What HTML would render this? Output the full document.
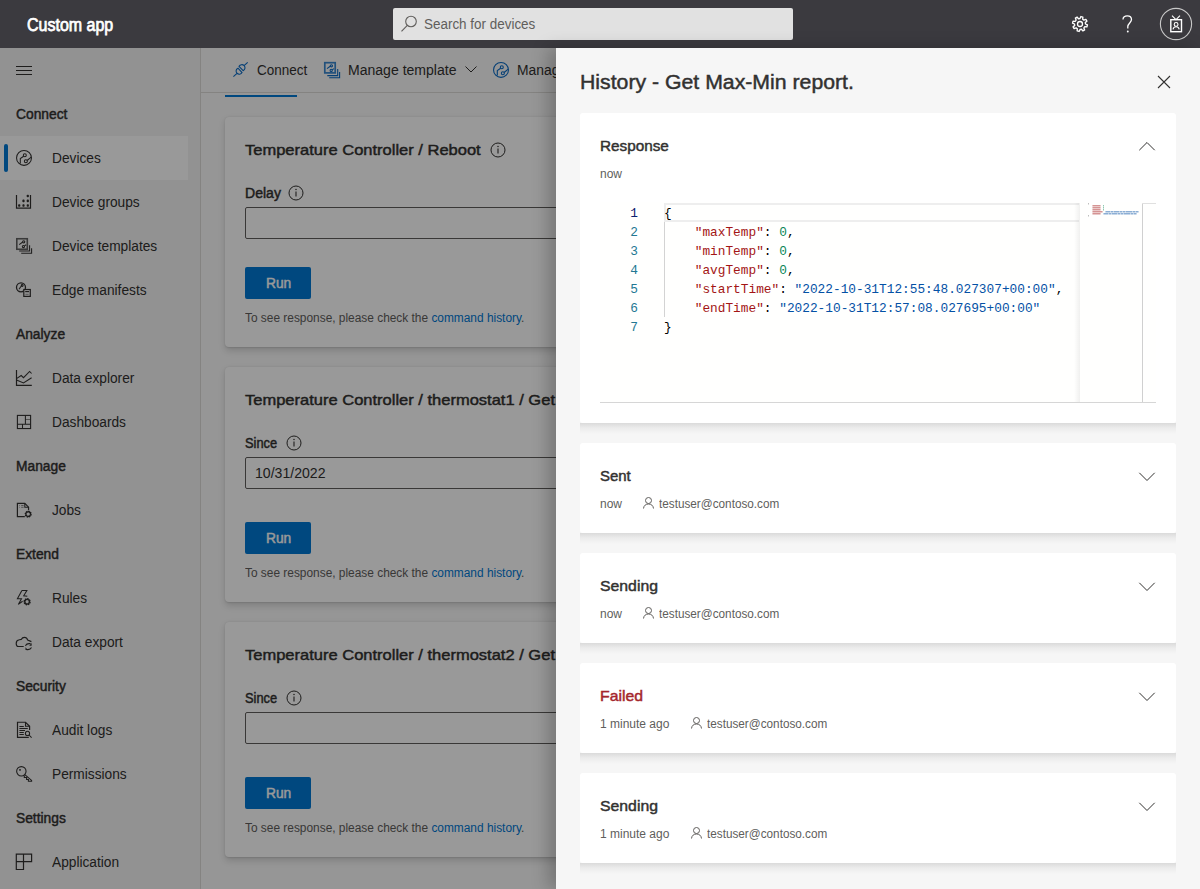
<!DOCTYPE html><html><head><meta charset="utf-8"><style>
*{box-sizing:border-box;margin:0;padding:0}
html,body{width:1200px;height:889px;overflow:hidden;position:relative;font-family:"Liberation Sans",sans-serif;color:#323130;background:#fafafa}
.t{position:absolute;white-space:nowrap}
.a{position:absolute}
svg{position:absolute;overflow:visible}
</style></head><body><div class="a" style="left:0;top:0;width:1200px;height:48px;background:#3b3a3f"></div>
<div class="t" style="left:27.3px;top:13px;font-size:18px;line-height:25px;-webkit-text-stroke:0.45px #fff;color:#fff;transform:scaleX(0.8883);transform-origin:0 0;-webkit-text-stroke:0.75px #fff;">Custom app</div>
<div class="a" style="left:393px;top:8px;width:400px;height:32px;background:#e1e1e1;border-radius:2px"></div>
<svg style="left:400px;top:15px" width="18" height="18" viewBox="0 0 18 18"><circle cx="11" cy="6.5" r="5.3" fill="none" stroke="#605e5c" stroke-width="1.1"/><line x1="7.3" y1="10.3" x2="1.5" y2="16.3" stroke="#605e5c" stroke-width="1.1"/></svg>
<div class="t" style="left:424px;top:14px;font-size:14px;line-height:20px;font-weight:normal;color:#605e5c;transform:scaleX(0.9599);transform-origin:0 0;">Search for devices</div>
<svg style="left:1070px;top:14px" width="20" height="20" viewBox="0 0 20 20"><path d="M15.50,10.00 L17.45,10.88 L16.93,12.87 L14.80,12.69 L13.89,13.89 L14.64,15.89 L12.87,16.93 L11.49,15.29 L10.00,15.50 L9.12,17.45 L7.13,16.93 L7.31,14.80 L6.11,13.89 L4.11,14.64 L3.07,12.87 L4.71,11.49 L4.50,10.00 L2.55,9.12 L3.07,7.13 L5.20,7.31 L6.11,6.11 L5.36,4.11 L7.13,3.07 L8.51,4.71 L10.00,4.50 L10.88,2.55 L12.87,3.07 L12.69,5.20 L13.89,6.11 L15.89,5.36 L16.93,7.13 L15.29,8.51Z" fill="none" stroke="#fff" stroke-width="1.35" stroke-linejoin="round"/><circle cx="10" cy="10" r="2.5" fill="none" stroke="#fff" stroke-width="1.3"/></svg>
<svg style="left:1118px;top:14px" width="20" height="20" viewBox="0 0 20 20"><path d="M5,5.4 C5,3.2 6.8,1.9 9.2,1.9 C11.6,1.9 13.5,3.4 13.5,5.6 C13.5,8.6 9.8,9.4 9.8,12.6 L9.8,14.6" fill="none" stroke="#fff" stroke-width="1.3"/><circle cx="9.8" cy="17.5" r="0.95" fill="#fff"/></svg>
<svg style="left:1158px;top:6px" width="36" height="36" viewBox="0 0 36 36"><circle cx="18" cy="18" r="15.6" fill="none" stroke="#c8c8c8" stroke-width="1.1"/><rect x="12.8" y="13.7" width="10.7" height="12" fill="none" stroke="#fff" stroke-width="1.4"/><path d="M14,9.6 L18,13.6 L22,9.6" fill="none" stroke="#fff" stroke-width="1.1"/><circle cx="18.1" cy="18.4" r="1.9" fill="none" stroke="#fff" stroke-width="1.1"/><path d="M15,23.4 C15.3,21.6 16.5,20.8 18.1,20.8 C19.7,20.8 20.9,21.6 21.2,23.4" fill="none" stroke="#fff" stroke-width="1.1"/></svg>
<div class="a" style="left:0;top:48px;width:200px;height:841px;background:#f4f4f4"></div>
<div class="a" style="left:200px;top:48px;width:1px;height:841px;background:#dcdad8"></div>
<div class="a" style="left:0;top:136px;width:188px;height:44px;background:#ffffff"></div>
<div class="a" style="left:4px;top:144px;width:4px;height:28px;background:#0078d4;border-radius:2px"></div>
<div class="a" style="left:16px;top:65.5px;width:16px;height:1px;background:#323130"></div>
<div class="a" style="left:16px;top:69.5px;width:16px;height:1px;background:#323130"></div>
<div class="a" style="left:16px;top:74px;width:16px;height:1px;background:#323130"></div>
<div class="t" style="left:15.5px;top:104px;font-size:14px;line-height:20px;-webkit-text-stroke:0.45px #323130;color:#323130;transform:scaleX(0.9850);transform-origin:0 0;">Connect</div>
<div class="t" style="left:51.5px;top:148px;font-size:14px;line-height:20px;font-weight:normal;color:#323130;transform:scaleX(0.9800);transform-origin:0 0;">Devices</div>
<div class="t" style="left:51.5px;top:192px;font-size:14px;line-height:20px;font-weight:normal;color:#323130;transform:scaleX(0.9800);transform-origin:0 0;">Device groups</div>
<div class="t" style="left:51.5px;top:236px;font-size:14px;line-height:20px;font-weight:normal;color:#323130;transform:scaleX(0.9800);transform-origin:0 0;">Device templates</div>
<div class="t" style="left:51.5px;top:280px;font-size:14px;line-height:20px;font-weight:normal;color:#323130;transform:scaleX(0.9800);transform-origin:0 0;">Edge manifests</div>
<div class="t" style="left:15.5px;top:324px;font-size:14px;line-height:20px;-webkit-text-stroke:0.45px #323130;color:#323130;transform:scaleX(0.9850);transform-origin:0 0;">Analyze</div>
<div class="t" style="left:51.5px;top:368px;font-size:14px;line-height:20px;font-weight:normal;color:#323130;transform:scaleX(0.9800);transform-origin:0 0;">Data explorer</div>
<div class="t" style="left:51.5px;top:412px;font-size:14px;line-height:20px;font-weight:normal;color:#323130;transform:scaleX(0.9800);transform-origin:0 0;">Dashboards</div>
<div class="t" style="left:15.5px;top:456px;font-size:14px;line-height:20px;-webkit-text-stroke:0.45px #323130;color:#323130;transform:scaleX(0.9850);transform-origin:0 0;">Manage</div>
<div class="t" style="left:51.5px;top:500px;font-size:14px;line-height:20px;font-weight:normal;color:#323130;transform:scaleX(0.9800);transform-origin:0 0;">Jobs</div>
<div class="t" style="left:15.5px;top:544px;font-size:14px;line-height:20px;-webkit-text-stroke:0.45px #323130;color:#323130;transform:scaleX(0.9850);transform-origin:0 0;">Extend</div>
<div class="t" style="left:51.5px;top:588px;font-size:14px;line-height:20px;font-weight:normal;color:#323130;transform:scaleX(0.9800);transform-origin:0 0;">Rules</div>
<div class="t" style="left:51.5px;top:632px;font-size:14px;line-height:20px;font-weight:normal;color:#323130;transform:scaleX(0.9800);transform-origin:0 0;">Data export</div>
<div class="t" style="left:15.5px;top:676px;font-size:14px;line-height:20px;-webkit-text-stroke:0.45px #323130;color:#323130;transform:scaleX(0.9850);transform-origin:0 0;">Security</div>
<div class="t" style="left:51.5px;top:720px;font-size:14px;line-height:20px;font-weight:normal;color:#323130;transform:scaleX(0.9800);transform-origin:0 0;">Audit logs</div>
<div class="t" style="left:51.5px;top:764px;font-size:14px;line-height:20px;font-weight:normal;color:#323130;transform:scaleX(0.9800);transform-origin:0 0;">Permissions</div>
<div class="t" style="left:15.5px;top:808px;font-size:14px;line-height:20px;-webkit-text-stroke:0.45px #323130;color:#323130;transform:scaleX(0.9850);transform-origin:0 0;">Settings</div>
<div class="t" style="left:51.5px;top:852px;font-size:14px;line-height:20px;font-weight:normal;color:#323130;transform:scaleX(0.9800);transform-origin:0 0;">Application</div>
<svg style="left:14px;top:148px" width="20" height="20" viewBox="0 0 20 20"><circle cx="10" cy="9.9" r="7.45" fill="none" stroke="#323130" stroke-width="1.05"/><circle cx="10.8" cy="7.2" r="1.5" fill="none" stroke="#323130" stroke-width="1.05"/><circle cx="11.85" cy="13.3" r="1.5" fill="none" stroke="#323130" stroke-width="1.05"/><path d="M9.7,8.2 L6.3,10.6 L6.3,15.4" fill="none" stroke="#323130" stroke-width="1.05"/><path d="M13.1,12.5 L17.2,9.1" fill="none" stroke="#323130" stroke-width="1.05"/></svg>
<svg style="left:14px;top:192px" width="20" height="20" viewBox="0 0 20 20"><path d="M2.5,2.9 L2.5,16.2 L16.5,16.2 L16.5,2.9" fill="none" stroke="#323130" stroke-width="1.2"/><rect x="4.1" y="12.2" width="2.2" height="2.6" rx="0.8" fill="#323130"/><rect x="8.4" y="12.2" width="2.2" height="2.6" rx="0.8" fill="#323130"/><rect x="12.700000000000001" y="12.2" width="2.2" height="2.6" rx="0.8" fill="#323130"/><rect x="8.4" y="7.6000000000000005" width="2.2" height="2.6" rx="0.8" fill="#323130"/><rect x="12.700000000000001" y="7.6000000000000005" width="2.2" height="2.6" rx="0.8" fill="#323130"/><rect x="12.700000000000001" y="2.7" width="2.2" height="2.6" rx="0.8" fill="#323130"/></svg>
<svg style="left:14px;top:236px" width="20" height="20" viewBox="0 0 20 20"><rect x="2.8" y="2.75" width="10.5" height="10.5" fill="none" stroke="#323130" stroke-opacity=".75" stroke-width="1.6"/><path d="M5.2,15 L15.6,15 L15.6,9.2" fill="none" stroke="#323130" stroke-width="1.05"/><path d="M7.2,17.3 L17.6,17.3 L17.6,12.2" fill="none" stroke="#323130" stroke-width="1.05"/><path d="M5.2,8.6 L8.8,6" fill="none" stroke="#323130" stroke-width="1.05"/><circle cx="9.7" cy="5.8" r="1.1" fill="none" stroke="#323130" stroke-width="1.05"/><circle cx="9.4" cy="10.5" r="1.1" fill="none" stroke="#323130" stroke-width="1.05"/><path d="M10.4,9.9 L12.2,8.7" fill="none" stroke="#323130" stroke-width="1.05"/></svg>
<svg style="left:14px;top:280px" width="20" height="20" viewBox="0 0 20 20"><circle cx="7" cy="7.3" r="4.5" fill="none" stroke="#323130" stroke-width="1.3"/><path d="M5,9.2 L7.8,5.3" fill="none" stroke="#323130" stroke-width="1.05"/><circle cx="8.2" cy="5.5" r="0.9" fill="none" stroke="#323130" stroke-width="1.05"/><rect x="9.8" y="9.5" width="6.5" height="6.9" fill="#f4f4f4" stroke="#323130" stroke-width="1.2"/><path d="M11.2,11.6 L15,11.6" fill="none" stroke="#323130" stroke-width="1.2"/><path d="M11.4,14.3 L14.6,14.3" fill="none" stroke="#323130" stroke-opacity=".5" stroke-width="1"/></svg>
<svg style="left:14px;top:368px" width="20" height="20" viewBox="0 0 20 20"><path d="M2.5,2 L2.5,17.3 L17.8,17.3" fill="none" stroke="#323130" stroke-width="1.2"/><path d="M2.5,10.6 L7.2,7.5 L9.5,9.7 L15.6,3.4 L17.6,5.5" fill="none" stroke="#323130" stroke-width="1.05"/><path d="M2.5,11.9 L9.5,15 L17.6,9.7" fill="none" stroke="#323130" stroke-width="1.05"/></svg>
<svg style="left:14px;top:412px" width="20" height="20" viewBox="0 0 20 20"><rect x="3.4" y="3.4" width="13.2" height="13.15" fill="none" stroke="#323130" stroke-width="1.1"/><path d="M11.4,3.4 L11.4,12.3 M3.4,12.3 L16.6,12.3 M8.5,12.3 L8.5,16.55" fill="none" stroke="#323130" stroke-width="1.05"/><path d="M11.4,7.5 L16.6,7.5" fill="none" stroke="#323130" stroke-opacity=".55" stroke-width="1"/></svg>
<svg style="left:14px;top:500px" width="20" height="20" viewBox="0 0 20 20"><path d="M10.8,16.55 L3.4,16.55 L3.4,3.4 L10.8,3.4 L14.55,7.2 L14.55,9.9" fill="none" stroke="#323130" stroke-width="1.2"/><path d="M10.8,3.4 L10.8,7.2 L14.55,7.2" fill="none" stroke="#323130" stroke-width="1.05"/><path d="M5.2,5.5 L5.8,5.5 M7.2,5.5 L9.6,5.5 M5.2,7.3 L5.8,7.3 M7.2,7.3 L9.6,7.3" fill="none" stroke="#323130" stroke-opacity=".6" stroke-width="0.9"/><path d="M16.30,14.10 L17.16,14.57 L16.97,15.25 L15.99,15.20 L15.68,15.58 L15.96,16.53 L15.35,16.87 L14.69,16.14 L14.20,16.20 L13.73,17.06 L13.05,16.87 L13.10,15.89 L12.72,15.58 L11.77,15.86 L11.43,15.25 L12.16,14.59 L12.10,14.10 L11.24,13.63 L11.43,12.95 L12.41,13.00 L12.72,12.62 L12.44,11.67 L13.05,11.33 L13.71,12.06 L14.20,12.00 L14.67,11.14 L15.35,11.33 L15.30,12.31 L15.68,12.62 L16.63,12.34 L16.97,12.95 L16.24,13.61Z" fill="none" stroke="#323130" stroke-width="1.1"/></svg>
<svg style="left:14px;top:588px" width="20" height="20" viewBox="0 0 20 20"><path d="M7.9,2.4 L12.9,2.4 L9.7,7.8 L13.3,8.3" fill="none" stroke="#323130" stroke-width="1.05"/><path d="M7.9,2.4 L3.4,10.7 L7.5,10.7 L4.3,16.4 L8.6,13.3" fill="none" stroke="#323130" stroke-width="1.05"/><path d="M15.20,13.70 L16.16,14.18 L15.96,14.89 L14.89,14.80 L14.58,15.18 L14.92,16.21 L14.29,16.56 L13.59,15.74 L13.10,15.80 L12.62,16.76 L11.91,16.56 L12.00,15.49 L11.62,15.18 L10.59,15.52 L10.24,14.89 L11.06,14.19 L11.00,13.70 L10.04,13.22 L10.24,12.51 L11.31,12.60 L11.62,12.22 L11.28,11.19 L11.91,10.84 L12.61,11.66 L13.10,11.60 L13.58,10.64 L14.29,10.84 L14.20,11.91 L14.58,12.22 L15.61,11.88 L15.96,12.51 L15.14,13.21Z" fill="none" stroke="#323130" stroke-width="1.1"/></svg>
<svg style="left:14px;top:632px" width="20" height="20" viewBox="0 0 20 20"><path d="M9.7,14.5 L4.6,14.5 C3,14.5 2.2,13.1 2.2,11.4 C2.2,9.4 3.5,8.1 5.3,7.8 L7.2,7.4 C7.9,6.1 9.1,5.4 10.5,5.4 C12,5.4 13.1,6.3 13.7,8.1 L17.4,9.6" fill="none" stroke="#323130" stroke-width="1.15"/><path d="M11.4,13.8 C12.2,12.3 13.6,11.6 15,11.6 L16.6,11.6" fill="none" stroke="#323130" stroke-width="1.05"/><path d="M17.6,10.9 L17.6,13.8 L15.2,13.8 Z" fill="#323130"/><path d="M17.5,15.5 C16.8,17 15.5,17.6 14,17.6 L12.6,17.6" fill="none" stroke="#323130" stroke-width="1.05"/><path d="M11.5,15.3 L11.5,18 L13.9,18 Z" fill="#323130"/></svg>
<svg style="left:14px;top:720px" width="20" height="20" viewBox="0 0 20 20"><path d="M14.8,17.45 L3.5,17.45 L3.5,2.25 L11.5,2.25 L15.6,6.3 L15.6,9.9" fill="none" stroke="#323130" stroke-width="1.2"/><path d="M11.5,2.25 L11.5,6.3 L15.6,6.3" fill="none" stroke="#323130" stroke-width="1.05"/><path d="M5.4,6.4 L9.8,6.4 M5.4,8.5 L13.8,8.5 M5.4,10.4 L11,10.4 M5.4,12.4 L9.8,12.4 M5.4,14.5 L9.8,14.5" fill="none" stroke="#323130" stroke-width="1.05"/><circle cx="13.5" cy="13.4" r="2.1" fill="none" stroke="#323130" stroke-width="1.05"/><path d="M15,15 L17.6,17.6" fill="none" stroke="#323130" stroke-width="1.05"/></svg>
<svg style="left:14px;top:764px" width="20" height="20" viewBox="0 0 20 20"><circle cx="7.35" cy="7.3" r="4.7" fill="none" stroke="#323130" stroke-width="1.1"/><rect x="5.2" y="5.1" width="1.6" height="1.6" fill="#323130"/><path d="M10.8,10.6 L17.6,16.4 L17.6,17.3 L14.4,17.3 L14.4,15.5 L12.6,15.5 L12.6,13.5 L10.3,13.5 L10.3,11.5" fill="none" stroke="#323130" stroke-width="1.1"/></svg>
<svg style="left:14px;top:852px" width="20" height="20" viewBox="0 0 20 20"><path d="M2.3,2.2 L17.6,2.2 L17.6,9.6 L9.5,9.6 L9.5,17.5 L2.3,17.5 Z M9.5,2.2 L9.5,9.6 M2.3,9.6 L9.5,9.6" fill="none" stroke="#323130" stroke-width="1.2"/></svg>
<div class="a" style="left:201px;top:92px;width:999px;height:1px;background:#dcdad8"></div>
<div class="a" style="left:225px;top:95px;width:72px;height:2px;background:#0078d4"></div>
<svg style="left:228px;top:58px" width="24" height="24" viewBox="0 0 24 24"><path d="M5.4,18.6 L9.03,15.34 M16.07,7.56 L19.7,4.3" fill="none" stroke="#0a6ac4" stroke-width="1.1"/><path d="M11.07,8.37 A3.14,3.14 0 1 1 15.12,12.69 Z" fill="none" stroke="#0a6ac4" stroke-width="1.1"/><path d="M9.98,10.21 A3.14,3.14 0 1 0 14.03,14.53 Z" fill="none" stroke="#0a6ac4" stroke-width="1.1"/></svg>
<div class="t" style="left:256.5px;top:60px;font-size:14px;line-height:20px;font-weight:normal;color:#323130;transform:scaleX(0.9626);transform-origin:0 0;">Connect</div>
<svg style="left:320px;top:58px" width="24" height="24" viewBox="0 0 24 24"><rect x="4.8" y="4.7" width="10.4" height="10.2" fill="none" stroke="#0a6ac4" stroke-opacity=".8" stroke-width="1.7"/><path d="M7.3,17.6 L17.7,17.6 L17.7,11" fill="none" stroke="#0a6ac4" stroke-width="1.1"/><path d="M9.2,19.8 L19.6,19.8 L19.6,14" fill="none" stroke="#0a6ac4" stroke-width="1.1"/><path d="M7,10.6 L10.6,8" fill="none" stroke="#0a6ac4" stroke-width="1.1"/><circle cx="11.4" cy="7.8" r="1.1" fill="none" stroke="#0a6ac4" stroke-width="1.1"/><circle cx="11.2" cy="12.4" r="1.1" fill="none" stroke="#0a6ac4" stroke-width="1.1"/><path d="M12.2,11.8 L14,10.6" fill="none" stroke="#0a6ac4" stroke-width="1.1"/></svg>
<div class="t" style="left:348px;top:60px;font-size:14px;line-height:20px;font-weight:normal;color:#323130;transform:scaleX(1.0029);transform-origin:0 0;">Manage template</div>
<svg style="left:464px;top:64px" width="14" height="10" viewBox="0 0 14 10"><path d="M1.5,2.5 L7,8 L12.5,2.5" fill="none" stroke="#323130" stroke-width="1"/></svg>
<svg style="left:491px;top:60px" width="20" height="20" viewBox="0 0 20 20"><circle cx="10" cy="9.9" r="7.45" fill="none" stroke="#0a6ac4" stroke-width="1.1"/><circle cx="10.8" cy="7.2" r="1.5" fill="none" stroke="#0a6ac4" stroke-width="1.1"/><circle cx="11.85" cy="13.3" r="1.5" fill="none" stroke="#0a6ac4" stroke-width="1.1"/><path d="M9.7,8.2 L6.3,10.6 L6.3,15.4" fill="none" stroke="#0a6ac4" stroke-width="1.1"/><path d="M13.1,12.5 L17.2,9.1" fill="none" stroke="#0a6ac4" stroke-width="1.1"/></svg>
<div class="t" style="left:516.5px;top:60px;font-size:14px;line-height:20px;font-weight:normal;color:#323130;transform:scaleX(0.9900);transform-origin:0 0;">Manage devices</div>
<div class="a" style="left:225px;top:117px;width:960px;height:230px;background:#fff;border-radius:4px;box-shadow:0 3.2px 7.2px rgba(0,0,0,.14),0 .6px 1.8px rgba(0,0,0,.11)"></div>
<div class="t" style="left:244.5px;top:139px;font-size:15px;line-height:21px;-webkit-text-stroke:0.45px #323130;color:#323130;transform:scaleX(1.1000);transform-origin:0 0;">Temperature Controller / Reboot</div>
<svg style="left:487.5px;top:140px" width="20" height="20" viewBox="0 0 20 20"><circle cx="10" cy="10" r="7.0" fill="none" stroke="#323130" stroke-width="1"/><circle cx="10" cy="6.6" r="0.75" fill="#323130"/><path d="M10,8.6 L10,13.6" stroke="#323130" stroke-width="1.1"/></svg>
<div class="t" style="left:244.5px;top:183px;font-size:14px;line-height:20px;-webkit-text-stroke:0.45px #323130;color:#323130;transform:scaleX(1.0031);transform-origin:0 0;">Delay</div>
<svg style="left:286px;top:182.8px" width="20" height="20" viewBox="0 0 20 20"><circle cx="10" cy="10" r="7.0" fill="none" stroke="#323130" stroke-width="1"/><circle cx="10" cy="6.6" r="0.75" fill="#323130"/><path d="M10,8.6 L10,13.6" stroke="#323130" stroke-width="1.1"/></svg>
<div class="a" style="left:245px;top:207px;width:900px;height:32px;border:1px solid #605e5c;border-radius:2px"></div>
<div class="a" style="left:245px;top:267px;width:66px;height:32px;background:#0078d4;border-radius:2px"></div>
<div class="t" style="left:266px;top:273px;font-size:14px;line-height:20px;-webkit-text-stroke:0.45px #fff;color:#fff;transform:scaleX(0.9834);transform-origin:0 0;">Run</div>
<div class="t" style="left:244.5px;top:310px;font-size:12px;line-height:17px;font-weight:normal;color:#605e5c;transform:scaleX(0.9908);transform-origin:0 0;">To see response, please check the <span style="color:#0078d4">command history</span>.</div>
<div class="a" style="left:225px;top:367px;width:960px;height:235px;background:#fff;border-radius:4px;box-shadow:0 3.2px 7.2px rgba(0,0,0,.14),0 .6px 1.8px rgba(0,0,0,.11)"></div>
<div class="t" style="left:244.5px;top:389px;font-size:15px;line-height:21px;-webkit-text-stroke:0.45px #323130;color:#323130;transform:scaleX(1.1000);transform-origin:0 0;">Temperature Controller / thermostat1 / Get Max-Min report.</div>
<div class="t" style="left:244.5px;top:433px;font-size:14px;line-height:20px;-webkit-text-stroke:0.45px #323130;color:#323130;transform:scaleX(0.9167);transform-origin:0 0;">Since</div>
<svg style="left:284px;top:432.8px" width="20" height="20" viewBox="0 0 20 20"><circle cx="10" cy="10" r="7.0" fill="none" stroke="#323130" stroke-width="1"/><circle cx="10" cy="6.6" r="0.75" fill="#323130"/><path d="M10,8.6 L10,13.6" stroke="#323130" stroke-width="1.1"/></svg>
<div class="a" style="left:245px;top:457px;width:900px;height:32px;border:1px solid #605e5c;border-radius:2px"></div>
<div class="t" style="left:254.5px;top:463px;font-size:14px;line-height:20px;font-weight:normal;color:#323130;transform:scaleX(1.0060);transform-origin:0 0;">10/31/2022</div>
<div class="a" style="left:245px;top:522px;width:66px;height:32px;background:#0078d4;border-radius:2px"></div>
<div class="t" style="left:266px;top:528px;font-size:14px;line-height:20px;-webkit-text-stroke:0.45px #fff;color:#fff;transform:scaleX(0.9834);transform-origin:0 0;">Run</div>
<div class="t" style="left:244.5px;top:565px;font-size:12px;line-height:17px;font-weight:normal;color:#605e5c;transform:scaleX(0.9908);transform-origin:0 0;">To see response, please check the <span style="color:#0078d4">command history</span>.</div>
<div class="a" style="left:225px;top:622px;width:960px;height:235px;background:#fff;border-radius:4px;box-shadow:0 3.2px 7.2px rgba(0,0,0,.14),0 .6px 1.8px rgba(0,0,0,.11)"></div>
<div class="t" style="left:244.5px;top:644px;font-size:15px;line-height:21px;-webkit-text-stroke:0.45px #323130;color:#323130;transform:scaleX(1.1000);transform-origin:0 0;">Temperature Controller / thermostat2 / Get Max-Min report.</div>
<div class="t" style="left:244.5px;top:688px;font-size:14px;line-height:20px;-webkit-text-stroke:0.45px #323130;color:#323130;transform:scaleX(0.9167);transform-origin:0 0;">Since</div>
<svg style="left:284px;top:687.8px" width="20" height="20" viewBox="0 0 20 20"><circle cx="10" cy="10" r="7.0" fill="none" stroke="#323130" stroke-width="1"/><circle cx="10" cy="6.6" r="0.75" fill="#323130"/><path d="M10,8.6 L10,13.6" stroke="#323130" stroke-width="1.1"/></svg>
<div class="a" style="left:245px;top:712px;width:900px;height:32px;border:1px solid #605e5c;border-radius:2px"></div>
<div class="a" style="left:245px;top:777px;width:66px;height:32px;background:#0078d4;border-radius:2px"></div>
<div class="t" style="left:266px;top:783px;font-size:14px;line-height:20px;-webkit-text-stroke:0.45px #fff;color:#fff;transform:scaleX(0.9834);transform-origin:0 0;">Run</div>
<div class="t" style="left:244.5px;top:820px;font-size:12px;line-height:17px;font-weight:normal;color:#605e5c;transform:scaleX(0.9908);transform-origin:0 0;">To see response, please check the <span style="color:#0078d4">command history</span>.</div>
<div class="a" style="left:0;top:48px;width:1200px;height:841px;background:rgba(0,0,0,.4)"></div>
<div class="a" style="left:556px;top:48px;width:644px;height:841px;background:#f6f6f6;box-shadow:-8px 0 16px rgba(0,0,0,.22)"></div>
<div class="t" style="left:580px;top:67.5px;font-size:20px;line-height:28px;-webkit-text-stroke:0.45px #323130;color:#323130;transform:scaleX(1.0624);transform-origin:0 0;">History - Get Max-Min report.</div>
<svg style="left:1154px;top:72px" width="20" height="20" viewBox="0 0 20 20"><path d="M4,4 L16,16 M16,4 L4,16" stroke="#323130" stroke-width="1.1"/></svg>
<div class="a" style="left:580px;top:113px;width:596px;height:310px;background:#fff;border-radius:3px"></div>
<div class="a" style="left:580px;top:423px;width:596px;height:11px;background:linear-gradient(rgba(0,0,0,.115),rgba(0,0,0,.045) 45%,rgba(0,0,0,0))"></div>
<div class="t" style="left:600px;top:135px;font-size:15px;line-height:21px;-webkit-text-stroke:0.45px #323130;color:#323130;transform:scaleX(1.0196);transform-origin:0 0;">Response</div>
<svg style="left:1139px;top:140.5px" width="16" height="11" viewBox="0 0 16 11"><path d="M0.3,9.2 L8,1.5 L15.7,9.2" fill="none" stroke="#323130" stroke-width="1"/></svg>
<div class="t" style="left:600px;top:166px;font-size:12px;line-height:17px;font-weight:normal;color:#605e5c;">now</div>
<div class="a" style="left:600px;top:202px;width:556px;height:200px;background:#fffffe"></div>
<div class="a" style="left:600px;top:402px;width:556px;height:1px;background:#d6d6d6"></div>
<div class="a" style="left:664px;top:203px;width:415px;height:19px;border:2px solid #eeeeee;border-right:none"></div>
<div class="a" style="left:664px;top:222px;width:1px;height:95px;background:#d3d3d3"></div>
<div class="a" style="left:1074px;top:203px;width:6px;height:199px;background:linear-gradient(to right,rgba(0,0,0,0),rgba(0,0,0,.06))"></div>
<div class="a" style="left:1142px;top:203px;width:1px;height:199px;background:#d0d0d0"></div>
<div class="a" style="left:1142px;top:203px;width:14px;height:1px;background:#e0e0e0"></div>
<div class="t" style="left:610px;width:28px;text-align:right;top:204px;font-family:'Liberation Mono',monospace;font-size:12.8px;line-height:19px;color:#0b216f">1</div>
<div class="t" style="left:664px;top:204px;font-family:'Liberation Mono',monospace;font-size:12.8px;line-height:19px"><span style="color:#000000">{</span></div>
<div class="t" style="left:610px;width:28px;text-align:right;top:223px;font-family:'Liberation Mono',monospace;font-size:12.8px;line-height:19px;color:#237893">2</div>
<div class="t" style="left:664px;top:223px;font-family:'Liberation Mono',monospace;font-size:12.8px;line-height:19px"><span style="color:#000000">&nbsp;&nbsp;&nbsp;&nbsp;</span><span style="color:#a31515">"maxTemp"</span><span style="color:#000000">:&nbsp;</span><span style="color:#098658">0</span><span style="color:#000000">,</span></div>
<div class="t" style="left:610px;width:28px;text-align:right;top:242px;font-family:'Liberation Mono',monospace;font-size:12.8px;line-height:19px;color:#237893">3</div>
<div class="t" style="left:664px;top:242px;font-family:'Liberation Mono',monospace;font-size:12.8px;line-height:19px"><span style="color:#000000">&nbsp;&nbsp;&nbsp;&nbsp;</span><span style="color:#a31515">"minTemp"</span><span style="color:#000000">:&nbsp;</span><span style="color:#098658">0</span><span style="color:#000000">,</span></div>
<div class="t" style="left:610px;width:28px;text-align:right;top:261px;font-family:'Liberation Mono',monospace;font-size:12.8px;line-height:19px;color:#237893">4</div>
<div class="t" style="left:664px;top:261px;font-family:'Liberation Mono',monospace;font-size:12.8px;line-height:19px"><span style="color:#000000">&nbsp;&nbsp;&nbsp;&nbsp;</span><span style="color:#a31515">"avgTemp"</span><span style="color:#000000">:&nbsp;</span><span style="color:#098658">0</span><span style="color:#000000">,</span></div>
<div class="t" style="left:610px;width:28px;text-align:right;top:280px;font-family:'Liberation Mono',monospace;font-size:12.8px;line-height:19px;color:#237893">5</div>
<div class="t" style="left:664px;top:280px;font-family:'Liberation Mono',monospace;font-size:12.8px;line-height:19px"><span style="color:#000000">&nbsp;&nbsp;&nbsp;&nbsp;</span><span style="color:#a31515">"startTime"</span><span style="color:#000000">:&nbsp;</span><span style="color:#0451a5">"2022-10-31T12:55:48.027307+00:00"</span><span style="color:#000000">,</span></div>
<div class="t" style="left:610px;width:28px;text-align:right;top:299px;font-family:'Liberation Mono',monospace;font-size:12.8px;line-height:19px;color:#237893">6</div>
<div class="t" style="left:664px;top:299px;font-family:'Liberation Mono',monospace;font-size:12.8px;line-height:19px"><span style="color:#000000">&nbsp;&nbsp;&nbsp;&nbsp;</span><span style="color:#a31515">"endTime"</span><span style="color:#000000">:&nbsp;</span><span style="color:#0451a5">"2022-10-31T12:57:08.027695+00:00"</span></div>
<div class="t" style="left:610px;width:28px;text-align:right;top:318px;font-family:'Liberation Mono',monospace;font-size:12.8px;line-height:19px;color:#237893">7</div>
<div class="t" style="left:664px;top:318px;font-family:'Liberation Mono',monospace;font-size:12.8px;line-height:19px"><span style="color:#000000">}</span></div>
<svg style="left:1088px;top:203px" width="60" height="16" viewBox="0 0 60 16" opacity=".5"><rect x="0" y="0" width="1" height="1.5" fill="#000000" opacity="0.5"/><rect x="4" y="2" width="1" height="1.5" fill="#a31515" opacity="0.5"/><rect x="5" y="2" width="1" height="1.5" fill="#a31515" opacity="0.9"/><rect x="6" y="2" width="1" height="1.5" fill="#a31515" opacity="0.9"/><rect x="7" y="2" width="1" height="1.5" fill="#a31515" opacity="0.9"/><rect x="8" y="2" width="1" height="1.5" fill="#a31515" opacity="0.9"/><rect x="9" y="2" width="1" height="1.5" fill="#a31515" opacity="0.9"/><rect x="10" y="2" width="1" height="1.5" fill="#a31515" opacity="0.9"/><rect x="11" y="2" width="1" height="1.5" fill="#a31515" opacity="0.9"/><rect x="12" y="2" width="1" height="1.5" fill="#a31515" opacity="0.5"/><rect x="15" y="2" width="1" height="1.5" fill="#098658" opacity="0.9"/><rect x="4" y="4" width="1" height="1.5" fill="#a31515" opacity="0.5"/><rect x="5" y="4" width="1" height="1.5" fill="#a31515" opacity="0.9"/><rect x="6" y="4" width="1" height="1.5" fill="#a31515" opacity="0.9"/><rect x="7" y="4" width="1" height="1.5" fill="#a31515" opacity="0.9"/><rect x="8" y="4" width="1" height="1.5" fill="#a31515" opacity="0.9"/><rect x="9" y="4" width="1" height="1.5" fill="#a31515" opacity="0.9"/><rect x="10" y="4" width="1" height="1.5" fill="#a31515" opacity="0.9"/><rect x="11" y="4" width="1" height="1.5" fill="#a31515" opacity="0.9"/><rect x="12" y="4" width="1" height="1.5" fill="#a31515" opacity="0.5"/><rect x="15" y="4" width="1" height="1.5" fill="#098658" opacity="0.9"/><rect x="4" y="6" width="1" height="1.5" fill="#a31515" opacity="0.5"/><rect x="5" y="6" width="1" height="1.5" fill="#a31515" opacity="0.9"/><rect x="6" y="6" width="1" height="1.5" fill="#a31515" opacity="0.9"/><rect x="7" y="6" width="1" height="1.5" fill="#a31515" opacity="0.9"/><rect x="8" y="6" width="1" height="1.5" fill="#a31515" opacity="0.9"/><rect x="9" y="6" width="1" height="1.5" fill="#a31515" opacity="0.9"/><rect x="10" y="6" width="1" height="1.5" fill="#a31515" opacity="0.9"/><rect x="11" y="6" width="1" height="1.5" fill="#a31515" opacity="0.9"/><rect x="12" y="6" width="1" height="1.5" fill="#a31515" opacity="0.5"/><rect x="15" y="6" width="1" height="1.5" fill="#098658" opacity="0.9"/><rect x="4" y="8" width="1" height="1.5" fill="#a31515" opacity="0.5"/><rect x="5" y="8" width="1" height="1.5" fill="#a31515" opacity="0.9"/><rect x="6" y="8" width="1" height="1.5" fill="#a31515" opacity="0.9"/><rect x="7" y="8" width="1" height="1.5" fill="#a31515" opacity="0.9"/><rect x="8" y="8" width="1" height="1.5" fill="#a31515" opacity="0.9"/><rect x="9" y="8" width="1" height="1.5" fill="#a31515" opacity="0.9"/><rect x="10" y="8" width="1" height="1.5" fill="#a31515" opacity="0.9"/><rect x="11" y="8" width="1" height="1.5" fill="#a31515" opacity="0.9"/><rect x="12" y="8" width="1" height="1.5" fill="#a31515" opacity="0.9"/><rect x="13" y="8" width="1" height="1.5" fill="#a31515" opacity="0.9"/><rect x="14" y="8" width="1" height="1.5" fill="#a31515" opacity="0.5"/><rect x="17" y="8" width="1" height="1.5" fill="#0451a5" opacity="0.5"/><rect x="18" y="8" width="1" height="1.5" fill="#0451a5" opacity="0.9"/><rect x="19" y="8" width="1" height="1.5" fill="#0451a5" opacity="0.9"/><rect x="20" y="8" width="1" height="1.5" fill="#0451a5" opacity="0.9"/><rect x="21" y="8" width="1" height="1.5" fill="#0451a5" opacity="0.9"/><rect x="22" y="8" width="1" height="1.5" fill="#0451a5" opacity="0.5"/><rect x="23" y="8" width="1" height="1.5" fill="#0451a5" opacity="0.9"/><rect x="24" y="8" width="1" height="1.5" fill="#0451a5" opacity="0.9"/><rect x="25" y="8" width="1" height="1.5" fill="#0451a5" opacity="0.5"/><rect x="26" y="8" width="1" height="1.5" fill="#0451a5" opacity="0.9"/><rect x="27" y="8" width="1" height="1.5" fill="#0451a5" opacity="0.9"/><rect x="28" y="8" width="1" height="1.5" fill="#0451a5" opacity="0.9"/><rect x="29" y="8" width="1" height="1.5" fill="#0451a5" opacity="0.9"/><rect x="30" y="8" width="1" height="1.5" fill="#0451a5" opacity="0.9"/><rect x="31" y="8" width="1" height="1.5" fill="#0451a5" opacity="0.5"/><rect x="32" y="8" width="1" height="1.5" fill="#0451a5" opacity="0.9"/><rect x="33" y="8" width="1" height="1.5" fill="#0451a5" opacity="0.9"/><rect x="34" y="8" width="1" height="1.5" fill="#0451a5" opacity="0.5"/><rect x="35" y="8" width="1" height="1.5" fill="#0451a5" opacity="0.9"/><rect x="36" y="8" width="1" height="1.5" fill="#0451a5" opacity="0.9"/><rect x="37" y="8" width="1" height="1.5" fill="#0451a5" opacity="0.5"/><rect x="38" y="8" width="1" height="1.5" fill="#0451a5" opacity="0.9"/><rect x="39" y="8" width="1" height="1.5" fill="#0451a5" opacity="0.9"/><rect x="40" y="8" width="1" height="1.5" fill="#0451a5" opacity="0.9"/><rect x="41" y="8" width="1" height="1.5" fill="#0451a5" opacity="0.9"/><rect x="42" y="8" width="1" height="1.5" fill="#0451a5" opacity="0.9"/><rect x="43" y="8" width="1" height="1.5" fill="#0451a5" opacity="0.9"/><rect x="44" y="8" width="1" height="1.5" fill="#0451a5" opacity="0.5"/><rect x="45" y="8" width="1" height="1.5" fill="#0451a5" opacity="0.9"/><rect x="46" y="8" width="1" height="1.5" fill="#0451a5" opacity="0.9"/><rect x="47" y="8" width="1" height="1.5" fill="#0451a5" opacity="0.5"/><rect x="48" y="8" width="1" height="1.5" fill="#0451a5" opacity="0.9"/><rect x="49" y="8" width="1" height="1.5" fill="#0451a5" opacity="0.9"/><rect x="50" y="8" width="1" height="1.5" fill="#0451a5" opacity="0.5"/><rect x="4" y="10" width="1" height="1.5" fill="#a31515" opacity="0.5"/><rect x="5" y="10" width="1" height="1.5" fill="#a31515" opacity="0.9"/><rect x="6" y="10" width="1" height="1.5" fill="#a31515" opacity="0.9"/><rect x="7" y="10" width="1" height="1.5" fill="#a31515" opacity="0.9"/><rect x="8" y="10" width="1" height="1.5" fill="#a31515" opacity="0.9"/><rect x="9" y="10" width="1" height="1.5" fill="#a31515" opacity="0.9"/><rect x="10" y="10" width="1" height="1.5" fill="#a31515" opacity="0.9"/><rect x="11" y="10" width="1" height="1.5" fill="#a31515" opacity="0.9"/><rect x="12" y="10" width="1" height="1.5" fill="#a31515" opacity="0.5"/><rect x="15" y="10" width="1" height="1.5" fill="#0451a5" opacity="0.5"/><rect x="16" y="10" width="1" height="1.5" fill="#0451a5" opacity="0.9"/><rect x="17" y="10" width="1" height="1.5" fill="#0451a5" opacity="0.9"/><rect x="18" y="10" width="1" height="1.5" fill="#0451a5" opacity="0.9"/><rect x="19" y="10" width="1" height="1.5" fill="#0451a5" opacity="0.9"/><rect x="20" y="10" width="1" height="1.5" fill="#0451a5" opacity="0.5"/><rect x="21" y="10" width="1" height="1.5" fill="#0451a5" opacity="0.9"/><rect x="22" y="10" width="1" height="1.5" fill="#0451a5" opacity="0.9"/><rect x="23" y="10" width="1" height="1.5" fill="#0451a5" opacity="0.5"/><rect x="24" y="10" width="1" height="1.5" fill="#0451a5" opacity="0.9"/><rect x="25" y="10" width="1" height="1.5" fill="#0451a5" opacity="0.9"/><rect x="26" y="10" width="1" height="1.5" fill="#0451a5" opacity="0.9"/><rect x="27" y="10" width="1" height="1.5" fill="#0451a5" opacity="0.9"/><rect x="28" y="10" width="1" height="1.5" fill="#0451a5" opacity="0.9"/><rect x="29" y="10" width="1" height="1.5" fill="#0451a5" opacity="0.5"/><rect x="30" y="10" width="1" height="1.5" fill="#0451a5" opacity="0.9"/><rect x="31" y="10" width="1" height="1.5" fill="#0451a5" opacity="0.9"/><rect x="32" y="10" width="1" height="1.5" fill="#0451a5" opacity="0.5"/><rect x="33" y="10" width="1" height="1.5" fill="#0451a5" opacity="0.9"/><rect x="34" y="10" width="1" height="1.5" fill="#0451a5" opacity="0.9"/><rect x="35" y="10" width="1" height="1.5" fill="#0451a5" opacity="0.5"/><rect x="36" y="10" width="1" height="1.5" fill="#0451a5" opacity="0.9"/><rect x="37" y="10" width="1" height="1.5" fill="#0451a5" opacity="0.9"/><rect x="38" y="10" width="1" height="1.5" fill="#0451a5" opacity="0.9"/><rect x="39" y="10" width="1" height="1.5" fill="#0451a5" opacity="0.9"/><rect x="40" y="10" width="1" height="1.5" fill="#0451a5" opacity="0.9"/><rect x="41" y="10" width="1" height="1.5" fill="#0451a5" opacity="0.9"/><rect x="42" y="10" width="1" height="1.5" fill="#0451a5" opacity="0.5"/><rect x="43" y="10" width="1" height="1.5" fill="#0451a5" opacity="0.9"/><rect x="44" y="10" width="1" height="1.5" fill="#0451a5" opacity="0.9"/><rect x="45" y="10" width="1" height="1.5" fill="#0451a5" opacity="0.5"/><rect x="46" y="10" width="1" height="1.5" fill="#0451a5" opacity="0.9"/><rect x="47" y="10" width="1" height="1.5" fill="#0451a5" opacity="0.9"/><rect x="48" y="10" width="1" height="1.5" fill="#0451a5" opacity="0.5"/><rect x="0" y="12" width="1" height="1.5" fill="#000000" opacity="0.5"/></svg>
<div class="a" style="left:580px;top:443px;width:596px;height:90px;background:#fff;border-radius:3px"></div>
<div class="a" style="left:580px;top:533px;width:596px;height:11px;background:linear-gradient(rgba(0,0,0,.115),rgba(0,0,0,.045) 45%,rgba(0,0,0,0))"></div>
<div class="t" style="left:600px;top:465px;font-size:15px;line-height:21px;-webkit-text-stroke:0.45px #323130;color:#323130;transform:scaleX(0.9972);transform-origin:0 0;">Sent</div>
<svg style="left:1139px;top:470.5px" width="16" height="11" viewBox="0 0 16 11"><path d="M0.3,1.8 L8,9.5 L15.7,1.8" fill="none" stroke="#323130" stroke-width="1"/></svg>
<div class="t" style="left:600px;top:496px;font-size:12px;line-height:17px;font-weight:normal;color:#605e5c;">now</div>
<svg style="left:641.8px;top:496px" width="14" height="14" viewBox="0 0 14 14"><circle cx="6.5" cy="4.5" r="3" fill="none" stroke="#605e5c" stroke-width="1"/><path d="M1.5,12.5 C1.8,9.5 3.8,8 6.5,8 C9.2,8 11.2,9.5 11.5,12.5" fill="none" stroke="#605e5c" stroke-width="1"/></svg>
<div class="t" style="left:658.8px;top:496px;font-size:12px;line-height:17px;font-weight:normal;color:#605e5c;transform:scaleX(0.9788);transform-origin:0 0;">testuser@contoso.com</div>
<div class="a" style="left:580px;top:553px;width:596px;height:90px;background:#fff;border-radius:3px"></div>
<div class="a" style="left:580px;top:643px;width:596px;height:11px;background:linear-gradient(rgba(0,0,0,.115),rgba(0,0,0,.045) 45%,rgba(0,0,0,0))"></div>
<div class="t" style="left:600px;top:575px;font-size:15px;line-height:21px;-webkit-text-stroke:0.45px #323130;color:#323130;transform:scaleX(1.0529);transform-origin:0 0;">Sending</div>
<svg style="left:1139px;top:580.5px" width="16" height="11" viewBox="0 0 16 11"><path d="M0.3,1.8 L8,9.5 L15.7,1.8" fill="none" stroke="#323130" stroke-width="1"/></svg>
<div class="t" style="left:600px;top:606px;font-size:12px;line-height:17px;font-weight:normal;color:#605e5c;">now</div>
<svg style="left:641.8px;top:606px" width="14" height="14" viewBox="0 0 14 14"><circle cx="6.5" cy="4.5" r="3" fill="none" stroke="#605e5c" stroke-width="1"/><path d="M1.5,12.5 C1.8,9.5 3.8,8 6.5,8 C9.2,8 11.2,9.5 11.5,12.5" fill="none" stroke="#605e5c" stroke-width="1"/></svg>
<div class="t" style="left:658.8px;top:606px;font-size:12px;line-height:17px;font-weight:normal;color:#605e5c;transform:scaleX(0.9788);transform-origin:0 0;">testuser@contoso.com</div>
<div class="a" style="left:580px;top:663px;width:596px;height:90px;background:#fff;border-radius:3px"></div>
<div class="a" style="left:580px;top:753px;width:596px;height:11px;background:linear-gradient(rgba(0,0,0,.115),rgba(0,0,0,.045) 45%,rgba(0,0,0,0))"></div>
<div class="t" style="left:600px;top:685px;font-size:15px;line-height:21px;-webkit-text-stroke:0.45px #a4262c;color:#a4262c;transform:scaleX(1.0528);transform-origin:0 0;">Failed</div>
<svg style="left:1139px;top:690.5px" width="16" height="11" viewBox="0 0 16 11"><path d="M0.3,1.8 L8,9.5 L15.7,1.8" fill="none" stroke="#323130" stroke-width="1"/></svg>
<div class="t" style="left:600px;top:716px;font-size:12px;line-height:17px;font-weight:normal;color:#605e5c;">1 minute ago</div>
<svg style="left:689.8px;top:716px" width="14" height="14" viewBox="0 0 14 14"><circle cx="6.5" cy="4.5" r="3" fill="none" stroke="#605e5c" stroke-width="1"/><path d="M1.5,12.5 C1.8,9.5 3.8,8 6.5,8 C9.2,8 11.2,9.5 11.5,12.5" fill="none" stroke="#605e5c" stroke-width="1"/></svg>
<div class="t" style="left:706.8px;top:716px;font-size:12px;line-height:17px;font-weight:normal;color:#605e5c;transform:scaleX(0.9788);transform-origin:0 0;">testuser@contoso.com</div>
<div class="a" style="left:580px;top:773px;width:596px;height:90px;background:#fff;border-radius:3px"></div>
<div class="a" style="left:580px;top:863px;width:596px;height:11px;background:linear-gradient(rgba(0,0,0,.115),rgba(0,0,0,.045) 45%,rgba(0,0,0,0))"></div>
<div class="t" style="left:600px;top:795px;font-size:15px;line-height:21px;-webkit-text-stroke:0.45px #323130;color:#323130;transform:scaleX(1.0529);transform-origin:0 0;">Sending</div>
<svg style="left:1139px;top:800.5px" width="16" height="11" viewBox="0 0 16 11"><path d="M0.3,1.8 L8,9.5 L15.7,1.8" fill="none" stroke="#323130" stroke-width="1"/></svg>
<div class="t" style="left:600px;top:826px;font-size:12px;line-height:17px;font-weight:normal;color:#605e5c;">1 minute ago</div>
<svg style="left:689.8px;top:826px" width="14" height="14" viewBox="0 0 14 14"><circle cx="6.5" cy="4.5" r="3" fill="none" stroke="#605e5c" stroke-width="1"/><path d="M1.5,12.5 C1.8,9.5 3.8,8 6.5,8 C9.2,8 11.2,9.5 11.5,12.5" fill="none" stroke="#605e5c" stroke-width="1"/></svg>
<div class="t" style="left:706.8px;top:826px;font-size:12px;line-height:17px;font-weight:normal;color:#605e5c;transform:scaleX(0.9788);transform-origin:0 0;">testuser@contoso.com</div></body></html>
